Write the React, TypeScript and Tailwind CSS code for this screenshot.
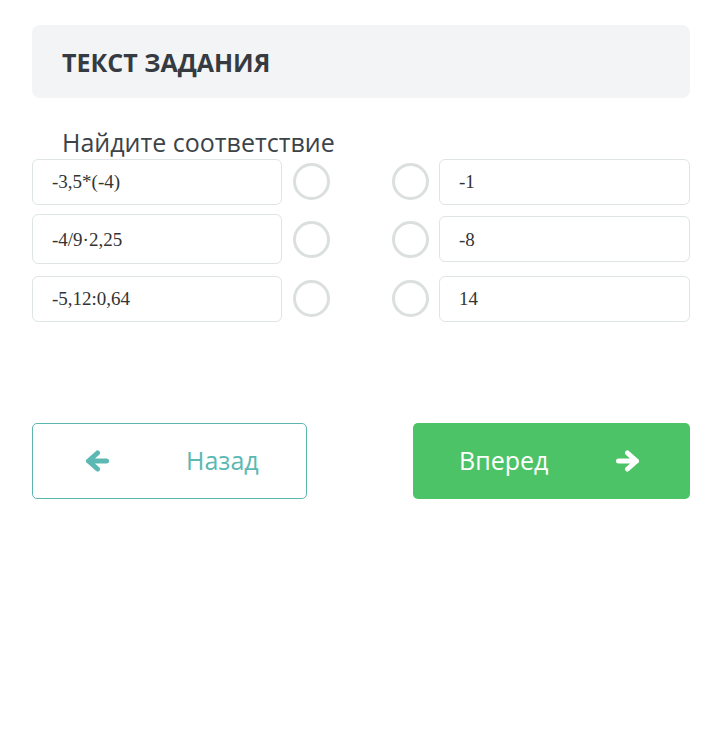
const left = ["-3,5*(-4)", "-4/9·2,25", "-5,12:0,64"];
const right = ["-1", "-8", "14"];
const rowClasses = ["h-[47px]", "mt-[9px] h-[50px]", "mt-[11px] h-[47px]"];
const leftHeights = ["h-[46px]", "h-[50px]", "h-[46px]"];

function Circle() {
  return <div className="h-[37px] w-[37px] shrink-0 rounded-full border-[3px] border-[#dcdfdf]" />;
}

function Arrow({ flip }: { flip?: boolean }) {
  return (
    <svg
      width="25"
      height="22"
      viewBox="0 0 25 22"
      className={flip ? "-scale-x-100" : ""}
      fill="none"
      stroke="currentColor"
      strokeWidth="5"
      strokeLinecap="round"
      strokeLinejoin="round"
    >
      <path d="M3.5 11h18M12.5 3l-9 8 9 8" />
    </svg>
  );
}

export default function App() {
  return (
    <div className="min-h-[735px] w-[705px] bg-white pt-[25px] font-['Open_Sans',sans-serif]">
      <div className="ml-[32px] w-[658px]">
        <div className="flex h-[73px] items-center rounded-lg bg-[#f2f4f5] pl-[30px]">
          <h1 className="pt-[2px] text-[25px] font-bold text-[#353b41]">ТЕКСТ ЗАДАНИЯ</h1>
        </div>

        <p className="mt-[28px] pl-[30px] text-[25px] leading-[32px] text-[#3c4349]">Найдите соответствие</p>

        <div className="flex flex-col">
          {left.map((l, i) => (
            <div key={l} className={`flex items-center justify-between ${rowClasses[i]}`}>
              <div className="flex items-center gap-[11px]">
                <div
                  className={`flex w-[250px] items-center rounded-md border border-[#dfe4e6] pl-[19px] pt-[2px] font-['Liberation_Serif',serif] text-[19px] text-[#333] ${leftHeights[i]}`}
                >
                  {l}
                </div>
                <Circle />
              </div>
              <div className="flex items-center gap-[10px]">
                <Circle />
                <div className="flex h-[46px] w-[251px] items-center rounded-md border border-[#dfe4e6] pl-[19px] pt-[2px] font-['Liberation_Serif',serif] text-[19px] text-[#333]">
                  {right[i]}
                </div>
              </div>
            </div>
          ))}
        </div>

        <div className="mt-[101px] flex justify-between">
          <button className="flex h-[76px] w-[275px] items-center rounded-[5px] border border-[#5db7b1] pl-[52px] text-[#5cb8b2]">
            <Arrow />
            <span className="ml-[76px] text-[25px]">Назад</span>
          </button>
          <button className="flex h-[76px] w-[277px] items-center rounded-[5px] bg-[#4cc366] pl-[46px] text-white">
            <span className="text-[25px]">Вперед</span>
            <span className="ml-[67px]">
              <Arrow flip />
            </span>
          </button>
        </div>
      </div>
    </div>
  );
}
